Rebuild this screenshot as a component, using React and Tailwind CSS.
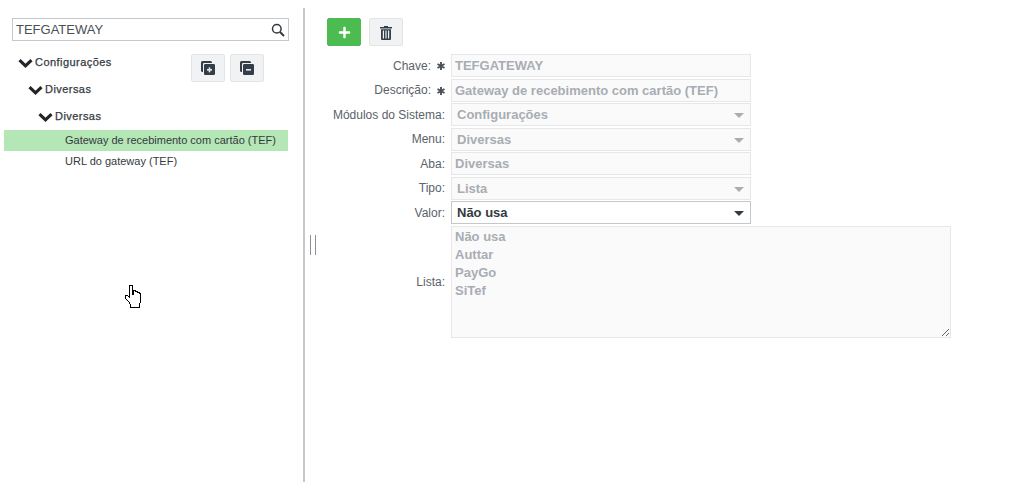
import React from "react";
import { FaPlus } from "react-icons/fa";

const font = "font-['Liberation_Sans',Arial,sans-serif]";

function Caret({ dark }) {
  return (
    <svg width="10" height="5" viewBox="0 0 10 5" className={`absolute right-[6px] top-[9px] ${dark ? "text-[#343a40]" : "text-[#a9adb1]"}`}>
      <path d="M0 0h10L5 5z" fill="currentColor" />
    </svg>
  );
}

function Label({ text, required }) {
  return (
    <div className="flex h-[23px] items-center justify-end pr-[6px] text-[12px] text-[#5b6268]">
      <span>{text}</span>
      {required && (
        <svg width="8" height="8" viewBox="0 0 8 8" className="ml-[6px] mt-[1px]" fill="none" stroke="#495057" strokeWidth="1.9">
          <path d="M4 0v8M0.5 2l7 4M0.5 6l7-4" />
        </svg>
      )}
    </div>
  );
}

function Field({ value, select, active }) {
  return (
    <div
      className={`relative h-[23px] w-[300px] border text-[13px] font-bold leading-[21px] ${
        active ? "border-[#c4c8cb] bg-white text-[#343a40] pl-[5px]" : "border-[#e6e7e8] bg-[#fafafa] text-[#a8adb3] " + (select ? "pl-[5px]" : "pl-[3px]")
      }`}
    >
      {value}
      {select && <Caret dark={active} />}
    </div>
  );
}

function Chevron() {
  return (
    <svg width="15" height="10" viewBox="0 0 15 10" className="mr-[2px] shrink-0" fill="none" stroke="#212529" strokeWidth="3.2">
      <path d="M1.5 2.2l6 5.6 6-5.6" />
    </svg>
  );
}

function TreeRow({ pad, label }) {
  return (
    <div className="flex h-[27px] items-center text-[11px] tracking-[0.45px] text-[#343a40]" style={{ paddingLeft: pad }}>
      <Chevron />
      <span className="[-webkit-text-stroke:0.25px_#343a40]">{label}</span>
    </div>
  );
}

function SquareButton({ children, className }) {
  return (
    <button className={`flex h-[28px] w-[34px] items-center justify-center rounded-[2px] border ${className}`}>
      {children}
    </button>
  );
}

function CopyIcon({ plus }) {
  return (
    <svg width="16" height="16" viewBox="0 0 16 16">
      <path d="M1 2.5A1.5 1.5 0 0 1 2.5 1h8A1.5 1.5 0 0 1 12 2.5V3H4a1 1 0 0 0-1 1v8h-.5A1.5 1.5 0 0 1 1 10.5z" fill="#343e48" />
      <rect x="4" y="4" width="11" height="11" rx="1.2" fill="#343e48" />
      <rect x="7" y="9" width="5" height="1.6" fill="#e8eaec" />
      {plus && <rect x="8.7" y="7.3" width="1.6" height="5" fill="#e8eaec" />}
    </svg>
  );
}

function TrashIcon() {
  return (
    <svg width="12" height="15" viewBox="0 0 12 15">
      <path d="M4 2V1h4v1h4v1.6H0V2z" fill="#343e48" />
      <path d="M1 4.3h10V14a1 1 0 0 1-1 1H2a1 1 0 0 1-1-1z" fill="#343e48" />
      <rect x="2.8" y="5.5" width="1.2" height="8" fill="#f1f2f3" />
      <rect x="5.4" y="5.5" width="1.2" height="8" fill="#f1f2f3" />
      <rect x="8" y="5.5" width="1.2" height="8" fill="#f1f2f3" />
    </svg>
  );
}

function HandCursor() {
  return (
    <svg width="17" height="24" viewBox="0 0 17 24" className="absolute left-[125px] top-[285px]" shapeRendering="crispEdges">
      <path
        d="M5.5 0.5h2v9h1v-4h2v1h2v1h2v1h1v8l-1 3v3h-9v-3l-2-3-3-3v-3h2l2 2v-12z"
        fill="#fff"
        stroke="#000"
        strokeWidth="1"
      />
    </svg>
  );
}

export default function App() {
  return (
    <div className={`relative flex h-[490px] w-[1011px] overflow-hidden bg-white ${font}`}>
      <aside className="mt-[8px] mb-[8px] h-[474px] w-[305px] shrink-0 border-r-2 border-[#c8c8c8] pl-[4px] pr-[15px] pt-[10px]">
        <div className="ml-[8px] flex h-[23px] w-[277px] items-center justify-between border border-[#c6c9cc] pl-[3px] pr-[3px] text-[13px] text-[#495057]">
          <span>TEFGATEWAY</span>
          <svg width="14" height="14" viewBox="0 0 14 14" fill="none" stroke="#343a40">
            <circle cx="5.8" cy="5.8" r="4.3" strokeWidth="1.5" />
            <path d="M9 9l4 4" strokeWidth="2" />
          </svg>
        </div>
        <div className="relative mt-[8px]">
          <div className="absolute left-[187px] top-[5px] flex gap-[5px]">
            <SquareButton className="border-[#e3e4e5] bg-[#f1f2f3]"><CopyIcon plus /></SquareButton>
            <SquareButton className="border-[#e3e4e5] bg-[#f1f2f3]"><CopyIcon /></SquareButton>
          </div>
          <TreeRow pad={14} label="Configurações" />
          <TreeRow pad={24} label="Diversas" />
          <TreeRow pad={34} label="Diversas" />
          <div className="flex h-[21px] w-[284px] items-center bg-[#b5e6b5] pl-[61px] text-[11px] text-[#343a40]">
            Gateway de recebimento com cartão (TEF)
          </div>
          <div className="flex h-[21px] items-center pl-[61px] text-[11px] text-[#343a40]">
            URL do gateway (TEF)
          </div>
        </div>
      </aside>

      <main className="relative flex-1 pl-[22px] pt-[18px]">
        <div className="flex gap-[8px]">
          <SquareButton className="border-[#4cbb50] bg-[#4cbb50]">
            <FaPlus className="h-[13px] w-[13px] text-white" />
          </SquareButton>
          <SquareButton className="border-[#e3e4e5] bg-[#f1f2f3]"><TrashIcon /></SquareButton>
        </div>

        <div className="mt-[8px] grid grid-cols-[124px_auto] justify-start gap-y-[1.5px]">
          <Label text="Chave:" required />
          <Field value="TEFGATEWAY" />
          <Label text="Descrição:" required />
          <Field value="Gateway de recebimento com cartão (TEF)" />
          <Label text="Módulos do Sistema:" />
          <Field value="Configurações" select />
          <Label text="Menu:" />
          <Field value="Diversas" select />
          <Label text="Aba:" />
          <Field value="Diversas" />
          <Label text="Tipo:" />
          <Field value="Lista" select />
          <Label text="Valor:" />
          <Field value="Não usa" select active />
          <div className="flex items-center justify-end pr-[6px] text-[12px] text-[#5b6268]">Lista:</div>
          <textarea
            readOnly
            defaultValue={"Não usa\nAuttar\nPayGo\nSiTef"}
            className="h-[112px] w-[500px] border border-[#e6e7e8] bg-[#fafafa] pl-[3px] pt-[1px] text-[13px] font-bold leading-[18px] text-[#a8adb3] outline-none"
          />
        </div>

        <div className="absolute left-[5px] top-[235px] h-[20px] w-[6px] border-x border-[#8c9196]" />
      </main>

      <HandCursor />
    </div>
  );
}
